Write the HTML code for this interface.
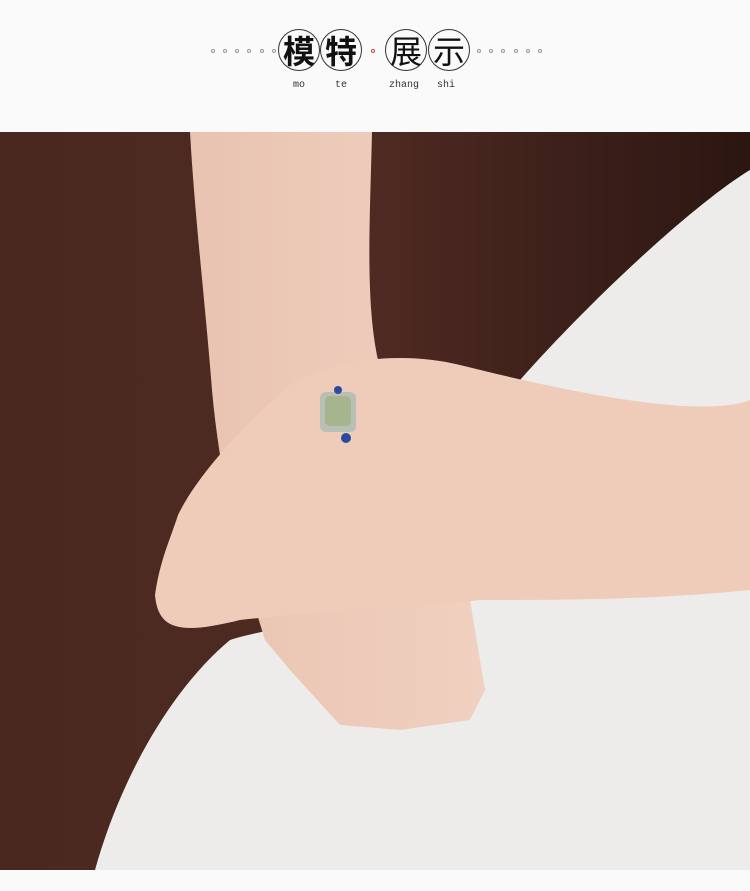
<!DOCTYPE html>
<html><head><meta charset="utf-8"><style>
body{margin:0;width:750px;height:891px;background:#fafafa;overflow:hidden;position:relative;font-family:"Liberation Sans","Noto Sans CJK SC",sans-serif}
.c{position:absolute;width:42px;height:42px;border:1.5px solid #333;border-radius:50%;top:29px;box-sizing:border-box;text-align:center;font:bold 32px/40px "Noto Sans CJK SC",sans-serif;color:#111}
.d{position:absolute;top:49px;width:4px;height:4px;border:1px solid #999;border-radius:50%;box-sizing:border-box}
.p{position:absolute;top:80px;font:10px "Liberation Mono",monospace;color:#333}
svg{position:absolute;left:0;top:132px}
</style></head><body>
<div class="d" style="left:211px"></div><div class="d" style="left:223px"></div><div class="d" style="left:235px"></div><div class="d" style="left:247px"></div><div class="d" style="left:260px"></div><div class="d" style="left:272px"></div>
<div class="d" style="left:477px"></div><div class="d" style="left:489px"></div><div class="d" style="left:501px"></div><div class="d" style="left:514px"></div><div class="d" style="left:526px"></div><div class="d" style="left:538px"></div>
<div class="d" style="left:371px;border-color:#c44"></div>
<div class="c" style="left:278px">模</div><div class="c" style="left:320px">特</div>
<div class="c" style="left:385px;font-weight:normal">展</div><div class="c" style="left:428px;font-weight:normal">示</div>
<div class="p" style="left:293px">mo</div><div class="p" style="left:335px">te</div>
<div class="p" style="left:389px">zhang</div><div class="p" style="left:437px">shi</div>
<svg width="750" height="738" viewBox="0 132 750 738">
<defs><linearGradient id="bg" x1="0" x2="1"><stop offset="0" stop-color="#4a2820"/><stop offset="0.5" stop-color="#4e2a22"/><stop offset="1" stop-color="#2c1612"/></linearGradient>
<linearGradient id="sk" x1="0" x2="1"><stop offset="0" stop-color="#e9c3b1"/><stop offset="1" stop-color="#f0d0c0"/></linearGradient></defs>
<rect x="0" y="132" width="750" height="738" fill="url(#bg)"/>
<path d="M750 170 C700 200 600 290 520 380 L420 600 C330 620 260 630 230 640 C170 690 120 780 95 870 L750 870 Z" fill="#eeecea"/>
<path d="M190 132 L372 132 C370 220 365 300 378 360 L470 600 L485 690 L470 720 L400 730 L340 725 L290 670 L265 640 C240 560 220 480 212 390 C205 300 195 220 190 132 Z" fill="url(#sk)"/>
<path d="M750 400 C700 420 560 390 460 365 C400 350 330 360 290 385 C250 420 200 470 178 515 C170 540 160 560 155 595 C158 630 180 635 240 620 C330 610 420 608 480 600 C560 600 650 600 750 590 Z" fill="#efcbba"/>
<rect x="320" y="392" width="36" height="40" rx="6" fill="#b8bfb5"/>
<rect x="325" y="396" width="26" height="30" rx="5" fill="#a7b58f"/>
<circle cx="346" cy="438" r="5" fill="#2a4aa0"/><circle cx="338" cy="390" r="4" fill="#2a4aa0"/>
</svg>
</body></html>
